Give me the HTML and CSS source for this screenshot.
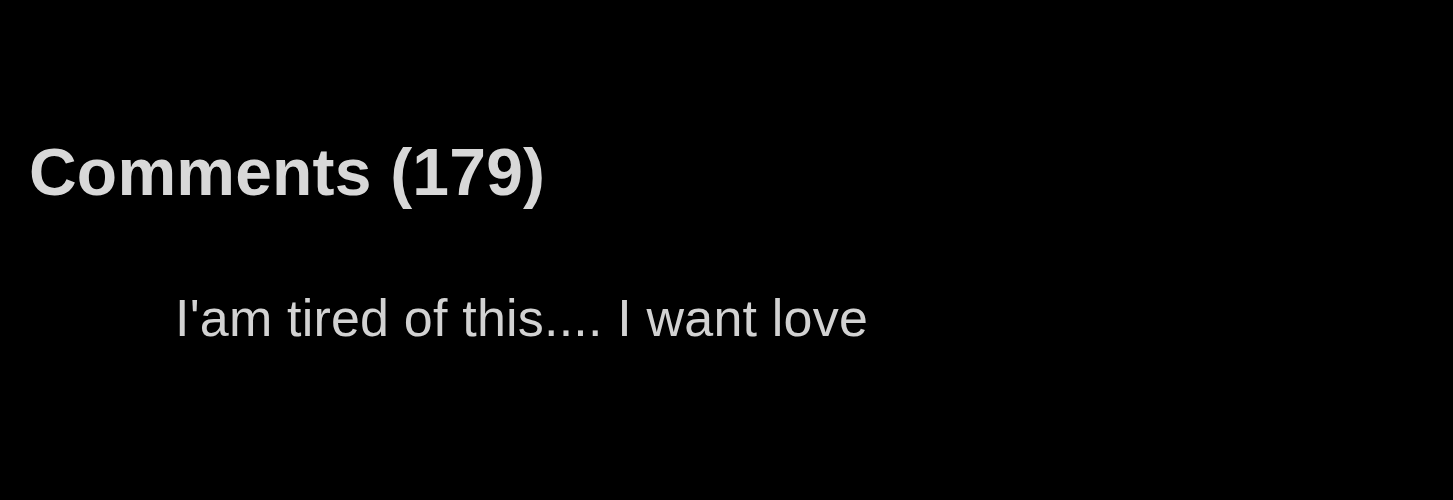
FILE: index.html
```html
<!DOCTYPE html>
<html>
<head>
    <title>Comments</title>
    <link rel="stylesheet" href="styles.css">
</head>
<body>
    <div class="comments">
        <h2 class="comments-title">Comments (179)</h2>
        <div class="comment">I'am tired of this.... I want love</div>
    </div>
</body>
</html>
```

FILE: styles.css
```css
html, body {
    margin: 0;
    background: #000;
}
body {
    font-family: "Liberation Sans", Arial, sans-serif;
    height: 500px;
    overflow: hidden;
}
.comments {
    padding: 134px 0 0 29px;
}
.comments-title {
    margin: 0;
    font-size: 66px;
    line-height: 76px;
    font-weight: bold;
    letter-spacing: 0.2px;
    color: #d8d8d8;
}
.comment {
    margin: 79px 0 0 146px;
    font-size: 52px;
    line-height: 59px;
    letter-spacing: 0.2px;
    color: #d2d2d2;
}
```
